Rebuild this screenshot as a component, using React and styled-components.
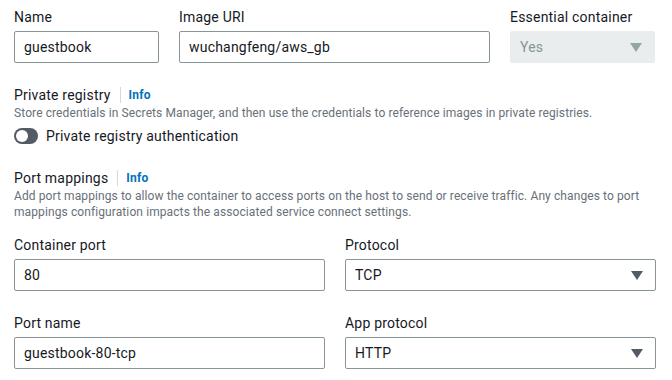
import React from 'react';
import styled, { createGlobalStyle } from 'styled-components';

const Global = createGlobalStyle`
    body {
        margin: 0;
        background: #fff;
        font-family: Roboto, 'Noto Sans', sans-serif;
        color: #16191f;
    }
`;

const Page = styled.div`
    width: 641px;
    padding: 7px 17px 0 14px;
`;

const Row = styled.div`
    display: grid;
    grid-template-columns: ${(p) => p.cols};
    column-gap: 20px;
    margin-bottom: ${(p) => p.gap || 0}px;
`;

const Field = styled.div`
    display: flex;
    flex-direction: column;
    gap: 4px;
`;

const Label = styled.label`
    font-size: 14px;
    line-height: 20px;
    letter-spacing: 0.2px;
`;

const Input = styled.div`
    box-sizing: border-box;
    height: 32px;
    border: 1px solid #879596;
    border-radius: 2px;
    padding: 0 8px 0 9px;
    display: flex;
    align-items: center;
    justify-content: space-between;
    font-size: 14px;
    letter-spacing: 0.2px;
    color: #16191f;
    background: ${(p) => (p.disabled ? '#eaeded' : '#fff')};
    border-color: ${(p) => (p.disabled ? '#eaeded' : '#879596')};

    span {
        color: ${(p) => (p.disabled ? '#879596' : '#16191f')};
    }
`;

const Caret = styled.svg`
    width: 12px;
    height: 9px;
    margin-right: 4px;
    fill: ${(p) => (p.disabled ? '#95a5a6' : '#545b64')};
`;

const Section = styled.div`
    margin-bottom: ${(p) => p.gap || 0}px;
`;

const Heading = styled.div`
    display: flex;
    align-items: center;
    font-size: 14px;
    line-height: 20px;
    letter-spacing: 0.2px;
`;

const Divider = styled.span`
    width: 1px;
    height: 16px;
    background: #d5dbdb;
    margin: 0 8px 0 9px;
`;

const Info = styled.a`
    color: #0073bb;
    font-weight: 700;
    font-size: 12px;
    letter-spacing: 0.2px;
    text-decoration: none;
`;

const Desc = styled.p`
    margin: 0;
    font-size: 12px;
    line-height: 16px;
    letter-spacing: 0.1px;
    color: #687078;
`;

const Toggle = styled.div`
    display: flex;
    align-items: center;
    gap: 8px;
    margin-top: 5px;
    font-size: 14px;
    line-height: 20px;
    letter-spacing: 0.2px;
`;

const Track = styled.span`
    position: relative;
    width: 24px;
    height: 16px;
    border-radius: 8px;
    background: #545b64;

    &::after {
        content: '';
        position: absolute;
        left: 2px;
        top: 2px;
        width: 12px;
        height: 12px;
        border-radius: 50%;
        background: #fff;
    }
`;

const Select = ({ value, disabled }) => (
    <Input disabled={disabled}>
        <span>{value}</span>
        <Caret disabled={disabled} viewBox="0 0 12 9">
            <path d="M0 0h12L6 9z" />
        </Caret>
    </Input>
);

const App = () => (
    <>
        <Global />
        <Page>
            <Row cols="145px 311px 145px" gap={22}>
                <Field>
                    <Label>Name</Label>
                    <Input><span>guestbook</span></Input>
                </Field>
                <Field>
                    <Label>Image URI</Label>
                    <Input><span>wuchangfeng/aws_gb</span></Input>
                </Field>
                <Field>
                    <Label>Essential container</Label>
                    <Select value="Yes" disabled />
                </Field>
            </Row>

            <Section gap={22}>
                <Heading>
                    Private registry<Divider /><Info href="#">Info</Info>
                </Heading>
                <Desc>Store credentials in Secrets Manager, and then use the credentials to reference images in private registries.</Desc>
                <Toggle>
                    <Track />
                    Private registry authentication
                </Toggle>
            </Section>

            <Section gap={15}>
                <Heading>
                    Port mappings<Divider /><Info href="#">Info</Info>
                </Heading>
                <Desc>Add port mappings to allow the container to access ports on the host to send or receive traffic. Any changes to port mappings configuration impacts the associated service connect settings.</Desc>
            </Section>

            <Row cols="311px 311px" gap={22}>
                <Field>
                    <Label>Container port</Label>
                    <Input><span>80</span></Input>
                </Field>
                <Field>
                    <Label>Protocol</Label>
                    <Select value="TCP" />
                </Field>
            </Row>

            <Row cols="311px 311px">
                <Field>
                    <Label>Port name</Label>
                    <Input><span>guestbook-80-tcp</span></Input>
                </Field>
                <Field>
                    <Label>App protocol</Label>
                    <Select value="HTTP" />
                </Field>
            </Row>
        </Page>
    </>
);

export default App;
